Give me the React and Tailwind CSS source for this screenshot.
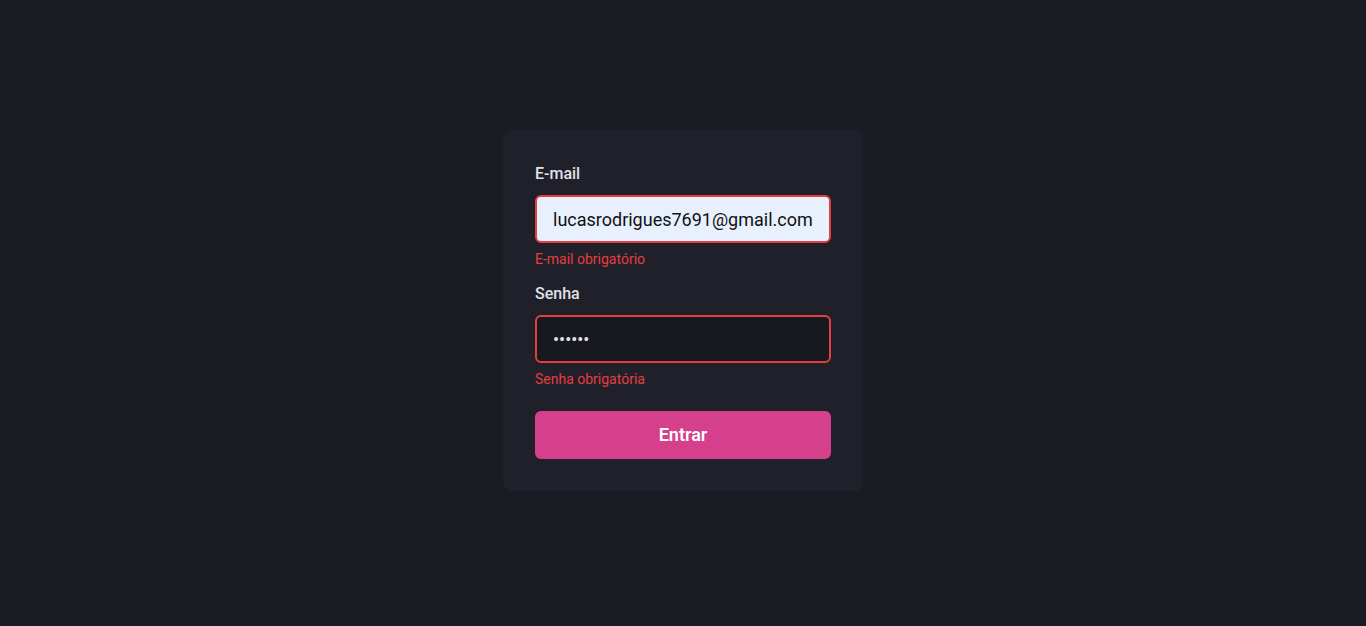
export default function App() {
  return (
    <div className="min-h-screen w-full bg-[#1a1b23] flex items-center justify-center pb-[5px] font-['Roboto',sans-serif]">
      <form className="w-[360px] bg-[#20202a] rounded-lg p-8 flex flex-col">
        <label className="text-base font-medium leading-6 text-[#e1e1e6]">E-mail</label>
        <input
          type="email"
          defaultValue="lucasrodrigues7691@gmail.com"
          className="mt-[9px] h-12 w-full rounded-md border-2 border-[#e53e3e] bg-[#e8f0fe] px-4 text-[18px] text-[#111] outline-none"
        />
        <span className="mt-[6px] text-sm leading-5 text-[#e53e3e]">E-mail obrigatório</span>

        <label className="mt-[13px] text-base font-medium leading-6 text-[#e1e1e6]">Senha</label>
        <input
          type="password"
          defaultValue="123456"
          className="mt-[9px] h-12 w-full rounded-md border-2 border-[#e53e3e] bg-[#181920] px-4 text-[18px] text-[#e1e1e6] outline-none"
        />
        <span className="mt-[6px] text-sm leading-5 text-[#e53e3e]">Senha obrigatória</span>

        <button
          type="button"
          className="mt-[22px] h-12 w-full rounded-md bg-[#d53f8c] text-lg font-semibold text-white"
        >
          Entrar
        </button>
      </form>
    </div>
  );
}
